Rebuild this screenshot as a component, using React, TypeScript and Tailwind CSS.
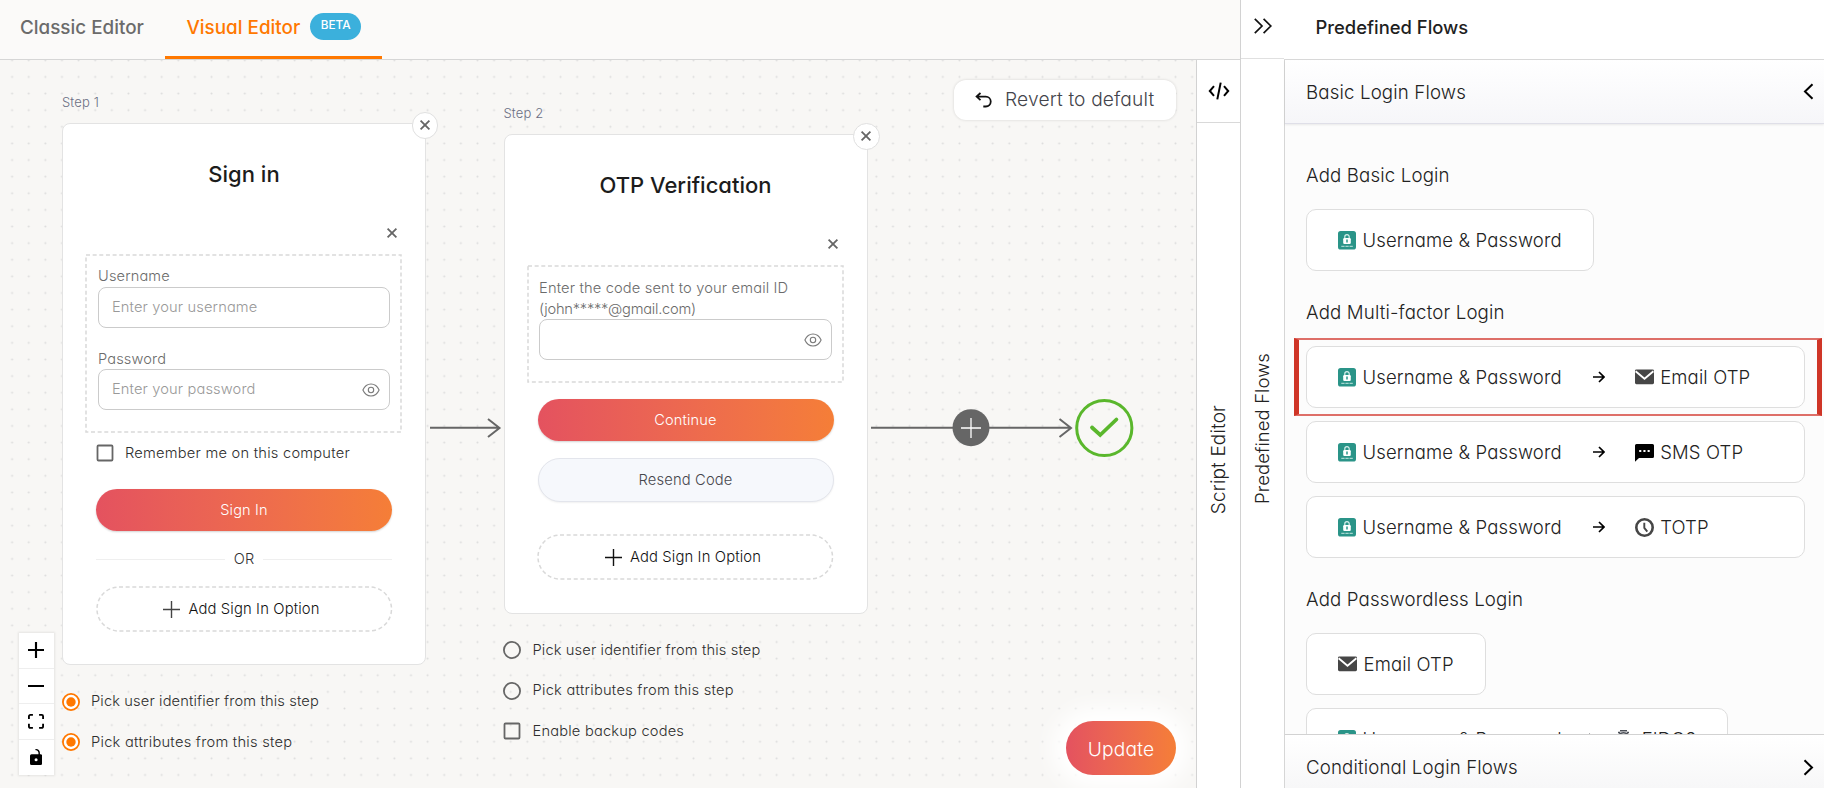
import type { ReactNode } from "react";

/* ---------- icons ---------- */

function CrossIcon() {
  return (
    <svg className="size-3" viewBox="0 0 12 12" fill="none" stroke="#666" strokeWidth="1.800">
      <path d="M1.600 1.600l8.800 8.800M10.400 1.600l-8.800 8.800" />
    </svg>
  );
}

function EyeIcon() {
  return (
    <svg className="h-[14px] w-[18px]" viewBox="0 0 18 14" fill="none" stroke="#7a7a7a" strokeWidth="1.100">
      <path d="M.9 7C2.600 3.200 5.500 1 9 1s6.400 2.200 8.100 6c-1.700 3.800-4.600 6-8.100 6S2.600 10.800.9 7z" />
      <circle cx="9" cy="7" r="2.700" />
    </svg>
  );
}

function ThinPlus({ color }: { color: string }) {
  return (
    <svg className="size-[17px]" viewBox="0 0 17 17" fill="none" stroke={color} strokeWidth="1.400">
      <path d="M8.500 0v17M0 8.500h17" />
    </svg>
  );
}

function LockBadge() {
  return (
    <svg className="h-[19px] w-[18px] shrink-0" viewBox="0 0 18 19">
      <rect width="18" height="18.500" rx="2.600" fill="#2a9488" />
      <path d="M6.800 8V5.800a2.200 2.200 0 0 1 4.400 0V8" fill="none" stroke="#d7efec" strokeWidth="1.200" />
      <rect x="5.200" y="7" width="7.600" height="6" rx="1.200" fill="#fff" />
      <path d="M9 8.600v2.800" stroke="#2a9488" strokeWidth="1.500" />
      <path d="M3.300 15.300h11.600" stroke="#c4e6e2" strokeWidth="1" strokeDasharray="3.300 .8" />
    </svg>
  );
}

function MailIcon() {
  return (
    <svg className="h-[16px] w-[19px] shrink-0" viewBox="0 0 19 16">
      <rect y=".5" width="19" height="14.700" rx="1.400" fill="#464646" />
      <path d="M.6 2.300l8.900 7.500 8.900-7.500" fill="none" stroke="#fff" strokeWidth="1.900" />
    </svg>
  );
}

function SmsIcon() {
  return (
    <svg className="h-[19px] w-[19px] shrink-0" viewBox="0 0 19 19">
      <path d="M1.500 1h16A1.500 1.500 0 0 1 19 2.500v11a1.500 1.500 0 0 1-1.500 1.500H4l-4 3.800V2.500A1.500 1.500 0 0 1 1.500 1z" fill="#000" />
      <path d="M4.200 8h2.100M8.400 8h2.100M12.600 8h2.100" stroke="#fff" strokeWidth="2.100" />
    </svg>
  );
}

function ClockIcon() {
  return (
    <svg className="h-[19px] w-[19px] shrink-0" viewBox="0 0 19 19" fill="none" stroke="#464646">
      <circle cx="9.500" cy="9.500" r="8.200" strokeWidth="2.600" />
      <path d="M9.300 4.800v5l3 3.800" strokeWidth="1.900" />
    </svg>
  );
}

function FidoIcon() {
  return (
    <svg className="h-[19px] w-[17px] shrink-0" viewBox="0 0 17 19" fill="none" stroke="#4b4f57" strokeWidth="1.500">
      <path d="M3 6.500C4 3.500 6 2.800 8.500 2.800s4.500.7 5.500 3.700M2 12c0-4 2-7 6.500-7s6.500 3 6.500 7M5 16c-.5-5 .5-8 3.500-8s4 3 3.500 8M5 .7h7M3 2.600h2M12 2.600h2" />
    </svg>
  );
}

function ArrowIcon() {
  return (
    <svg className="h-[12px] w-[12px] shrink-0" viewBox="0 0 12 12" fill="none" stroke="#000" strokeWidth="1.700">
      <path d="M0 6h10.800M6 1l5 5-5 5" />
    </svg>
  );
}

/* ---------- shared pieces ---------- */

function DashedOutline({ radius }: { radius: number }) {
  return (
    <svg className="pointer-events-none absolute inset-0 size-full overflow-visible">
      <rect
        className="h-full w-full"
        rx={radius}
        fill="none"
        stroke="#d9d9d9"
        strokeWidth="1.500"
        strokeDasharray="4 2.650"
      />
    </svg>
  );
}

function Field({ placeholder, eye }: { placeholder?: string; eye?: boolean }) {
  return (
    <div className="flex h-[40.500px] items-center justify-between rounded-lg border border-[#cbcbcb] bg-white pr-[9px] pl-[13px]">
      <span className="pt-[1.500px] text-[14.650px] text-[#999]">{placeholder}</span>
      {eye && (
        <span className="pt-px">
          <EyeIcon />
        </span>
      )}
    </div>
  );
}

function AddOption({ color }: { color: string }) {
  return (
    <div className="px-[0.750px]">
      <button className="relative flex h-[44px] w-full items-center justify-center gap-2 pr-[5px] text-[14.800px] text-[#111]">
        <DashedOutline radius={22} />
        <ThinPlus color={color} />
        Add Sign In Option
      </button>
    </div>
  );
}

function PrimaryButton({ children }: { children: ReactNode }) {
  return (
    <button className="flex h-[42px] w-full items-center justify-center rounded-full bg-linear-to-r from-[#e4525f] to-[#f57e37] pt-[2px] text-[14.600px] text-white shadow-[0_1px_2px_rgba(0,0,0,0.18)]">
      {children}
    </button>
  );
}

function Choice({ label, kind, tracking }: { label: string; kind: "on" | "off" | "box"; tracking?: string }) {
  return (
    <div className="-ml-[0.500px] flex h-5 items-center gap-[11.500px]">
      <svg className="size-[18px]" viewBox="0 0 18 18" fill="none" strokeWidth="1.800">
        {kind === "on" && (
          <>
            <circle cx="9" cy="9" r="8.100" stroke="#ff7800" fill="#fff" />
            <circle cx="9" cy="9" r="4.700" fill="#ff7800" />
          </>
        )}
        {kind === "off" && <circle cx="9" cy="9" r="8.100" stroke="#666" />}
        {kind === "box" && <rect x="1.500" y="1.500" width="15" height="15" rx="1" stroke="#666" />}
      </svg>
      <span className={`pt-[1.500px] text-[14.650px] whitespace-nowrap text-[#2e2e2e] ${tracking ?? ""}`}>{label}</span>
    </div>
  );
}

function StepCard({ title, height, children }: { title: string; height: string; children: ReactNode }) {
  return (
    <div className={`relative w-[364px] rounded-lg border border-[#e3e3e3] bg-white ${height}`}>
      <button className="absolute -top-[12px] -right-[13px] flex size-[26.500px] items-center justify-center rounded-full border border-[#e0e0e0] bg-white">
        <CrossIcon />
      </button>
      <h2 className="mt-[35px] text-center text-[22px] leading-[30px] font-[470] tracking-normal text-[#1c1c1c]">
        {title}
      </h2>
      <div className="mt-[38px] flex justify-end pr-[27.500px]">
        <CrossIcon />
      </div>
      {children}
    </div>
  );
}

/* ---------- canvas ---------- */

function FlowCanvas() {
  return (
    <div className="relative flex-1 overflow-hidden bg-[#f8f7f5]">
      <svg className="absolute inset-0 size-full">
        <defs>
          <pattern id="dots" x="3.800" y="-8" width="16.620" height="16.620" patternUnits="userSpaceOnUse">
            <circle cx="8.310" cy="8.310" r="1.050" fill="#dcdcdc" />
          </pattern>
        </defs>
        <rect width="100%" height="100%" fill="url(#dots)" />
        <g fill="none" stroke="#666" strokeWidth="2">
          <path d="M430 367.700h69M488 359l11.500 9-11.500 9" />
          <path d="M871 367.700h199M1059.500 359l11.500 9-11.500 9" />
          <circle cx="971" cy="367.700" r="18.500" fill="#666" stroke="none" />
          <path d="M971 358v20M961 368h20" stroke="#fff" strokeWidth="1.300" />
        </g>
        <g fill="none" stroke="#5ab72c" strokeWidth="3">
          <circle cx="1104.300" cy="368" r="27.600" />
          <path d="M1092 367.500l8.200 7.500 16.200-15.500" strokeWidth="3.800" strokeLinecap="round" />
        </g>
      </svg>

      <div className="absolute top-[34px] left-[62px]">
        <div className="h-[29px] text-[13px] leading-[17px] text-[#6b6f84]">Step 1</div>
        <StepCard title="Sign in" height="h-[542px]">
          <div className="relative mr-[24px] ml-[23px] mt-[16px] h-[177px] pt-[11px] pr-[11px] pl-3">
            <DashedOutline radius={0} />
            <div className="text-[14.600px] leading-5 text-[#6b6b6b]">Username</div>
            <div className="mt-px">
              <Field placeholder="Enter your username" />
            </div>
            <div className="mt-[21.500px] text-[14.600px] leading-5 text-[#6b6b6b]">Password</div>
            <Field placeholder="Enter your password" eye />
          </div>
          <div className="mx-[33px]">
            <div className="mt-[11px]">
              <Choice kind="box" label="Remember me on this computer" tracking="tracking-[0.240px]" />
            </div>
            <div className="mt-[26px]">
              <PrimaryButton>Sign In</PrimaryButton>
            </div>
            <div className="mt-[18.500px] flex h-5 items-center gap-[9px] text-[14.600px] text-[#333]">
              <span className="h-[1.500px] flex-1 bg-[#efefef]" />
              OR
              <span className="h-[1.500px] flex-1 bg-[#efefef]" />
            </div>
            <div className="mt-[17.500px]">
              <AddOption color="#444" />
            </div>
          </div>
        </StepCard>
        <div className="mt-[26.500px] flex flex-col gap-[20.500px]">
          <Choice kind="on" label="Pick user identifier from this step" />
          <Choice kind="on" label="Pick attributes from this step" tracking="tracking-[0.270px]" />
        </div>
      </div>

      <div className="absolute top-[45px] left-[503.500px]">
        <div className="h-[29px] text-[13px] leading-[17px] text-[#6b6f84]">Step 2</div>
        <StepCard title="OTP Verification" height="h-[480px]">
          <div className="relative mr-[24px] ml-[23px] mt-[16px] h-[116px] pt-[12px] pr-[11px] pl-[11.500px]">
            <DashedOutline radius={0} />
            <div className="text-[14.700px] leading-[20.500px] text-[#6b6b6b]">
              Enter the code sent to your email ID
              <br />
              <span className="tracking-[-0.250px]">(john*****@gmail.com)</span>
            </div>
            <Field eye />
          </div>
          <div className="mx-[33px]">
            <div className="mt-[17px]">
              <PrimaryButton>Continue</PrimaryButton>
            </div>
            <button className="mt-[17px] flex h-[43.500px] w-full items-center justify-center rounded-full border border-[#e3e5ec] bg-[#f6f8fc] text-[14.750px] text-[#46464c] shadow-[0_1px_2px_rgba(0,0,0,0.06)]">
              Resend Code
            </button>
            <div className="mt-[33.500px]">
              <AddOption color="#111" />
            </div>
          </div>
        </StepCard>
        <div className="mt-[26px] flex flex-col gap-[20.500px]">
          <Choice kind="off" label="Pick user identifier from this step" />
          <Choice kind="off" label="Pick attributes from this step" tracking="tracking-[0.270px]" />
          <Choice kind="box" label="Enable backup codes" tracking="tracking-[0.200px]" />
        </div>
      </div>

      <button className="absolute top-[19.500px] left-[953.500px] flex h-[40.500px] w-[222.500px] items-center rounded-xl bg-white pl-[21px] text-[19.200px] whitespace-nowrap text-[#44444b] shadow-[0_0_3px_rgba(0,0,0,0.15)]">
        <svg className="mr-[13.500px] h-4 w-[17px] shrink-0" viewBox="0 0 17 16" fill="none" stroke="#111" strokeWidth="1.800">
          <path d="M5.500 1L1.600 4.600l3.900 3.600M1.600 4.600h9.200a4.900 4.900 0 0 1 0 9.900H8.300" />
        </svg>
        Revert to default
      </button>

      <div className="absolute top-[573px] left-[18.500px] flex w-[35px] flex-col divide-y divide-[#eee] bg-white shadow-[0_0_2px_1px_rgba(0,0,0,0.08)]">
        <button className="flex h-[35.500px] items-center justify-center">
          <svg className="size-4" viewBox="0 0 32 32">
            <path d="M32 18.133H18.133V32h-4.266V18.133H0v-4.266h13.867V0h4.266v13.867H32z" />
          </svg>
        </button>
        <button className="flex h-[35.500px] items-center justify-center">
          <svg className="w-4" viewBox="0 0 32 5">
            <path d="M0 0h32v4.200H0z" />
          </svg>
        </button>
        <button className="flex h-[35.500px] items-center justify-center">
          <svg className="w-4" viewBox="0 0 32 30">
            <path d="M3.692 4.630c0-.53.4-.938.939-.938h5.215V0H4.708C2.130 0 0 2.054 0 4.630v5.216h3.692V4.631zM27.354 0h-5.200v3.692h5.170c.53 0 .984.4.984.939v5.215H32V4.631A4.624 4.624 0 0027.354 0zm.954 24.830c0 .532-.4.940-.939.940h-5.215v3.768h5.215c2.577 0 4.631-2.130 4.631-4.707v-5.139h-3.692v5.139zm-23.677.940c-.531 0-.939-.4-.939-.940v-5.138H0v5.139c0 2.577 2.130 4.707 4.708 4.707h5.138V25.770H4.631z" />
          </svg>
        </button>
        <button className="flex h-[35px] items-center justify-center">
          <svg className="h-4" viewBox="0 0 25 32">
            <path d="M21.333 10.667H19.810V7.619C19.810 3.429 16.380 0 12.190 0c-4.114 1.828-1.370 2.133.305 2.438 1.676.305 4.420 2.590 4.420 5.181v3.048H3.047A3.056 3.056 0 000 13.714v15.238A3.056 3.056 0 003.048 32h18.285a3.056 3.056 0 003.048-3.048V13.714a3.056 3.056 0 00-3.048-3.047zM12.190 24.533a3.056 3.056 0 01-3.047-3.047 3.056 3.056 0 013.047-3.048 3.056 3.056 0 013.048 3.048 3.056 3.056 0 01-3.048 3.047z" />
          </svg>
        </button>
      </div>

      <button className="absolute top-[661px] left-[1066px] flex h-[54px] w-[110px] items-center justify-center rounded-full bg-linear-to-r from-[#e4525f] to-[#f57e37] pt-[2px] text-[19.200px] text-white shadow-[0_0_22px_14px_#fff]">
        Update
      </button>
    </div>
  );
}

/* ---------- predefined flows panel ---------- */

function FlowItem({ width, children }: { width?: string; children: ReactNode }) {
  return (
    <div
      className={`flex h-[62px] shrink-0 items-center self-start rounded-[10px] border border-[#dedede] bg-white px-[31px] text-[18.500px] whitespace-nowrap text-[#222] ${width ?? ""}`}
    >
      {children}
    </div>
  );
}

function UserPass() {
  return (
    <span className="flex items-center gap-[6.500px]">
      <LockBadge />
      Username &amp; Password
    </span>
  );
}

function SecondFactor({ icon, label }: { icon: ReactNode; label: string }) {
  return (
    <>
      <span className="mr-[30px] ml-[31px]">
        <ArrowIcon />
      </span>
      <span className="flex items-center gap-[6.500px]">
        {icon}
        {label}
      </span>
    </>
  );
}

function FlowPanel() {
  return (
    <aside className="flex w-[540px] flex-col bg-white">
      <div className="h-[60px] shrink-0 border-b border-[#d9d9d9] pl-[31.500px]">
        <h1 className="mt-[14px] text-[18.400px] leading-[26px] font-[490] tracking-normal text-[#1f1f1f]">
          Predefined Flows
        </h1>
      </div>
      <div className="flex min-h-0 flex-1 flex-col border-l border-[#d6d6d6] bg-[#fcfcfc] text-[18.700px] leading-[27px] text-[#222]">
        <div className="z-10 flex h-16 shrink-0 items-center justify-between border-b border-[#dfdfe8] bg-linear-to-b from-white to-[#f6f6f9] pr-[10px] pl-[21px] shadow-[0_1px_2px_rgba(0,0,0,0.08)]">
          <span className="pt-px">Basic Login Flows</span>
          <svg className="h-[17px] w-[11px]" viewBox="0 0 11 17" fill="none" stroke="#000" strokeWidth="2">
            <path d="M9.500 1.300L2 8.500l7.500 7.200" />
          </svg>
        </div>
        <div className="flex min-h-0 flex-1 flex-col overflow-hidden px-[21px] pt-[38px]">
          <h3 className="shrink-0">Add Basic Login</h3>
          <div className="mt-5 flex shrink-0 flex-col">
            <FlowItem>
              <UserPass />
            </FlowItem>
          </div>
          <h3 className="mt-7 shrink-0">Add Multi-factor Login</h3>
          <div className="relative mt-5 flex shrink-0 flex-col gap-[13px]">
            <div className="pointer-events-none absolute -top-[8px] -left-[12px] h-[78px] w-[528px] border-x-[5px] border-y-[2px] border-x-[#cf3527] border-y-[#de6f68]" />
            <FlowItem width="w-[499px]">
              <UserPass />
              <SecondFactor icon={<MailIcon />} label="Email OTP" />
            </FlowItem>
            <FlowItem width="w-[499px]">
              <UserPass />
              <SecondFactor icon={<SmsIcon />} label="SMS OTP" />
            </FlowItem>
            <FlowItem width="w-[499px]">
              <UserPass />
              <SecondFactor icon={<ClockIcon />} label="TOTP" />
            </FlowItem>
          </div>
          <h3 className="mt-7 shrink-0">Add Passwordless Login</h3>
          <div className="mt-5 flex shrink-0 flex-col gap-[13px]">
            <FlowItem>
              <span className="flex items-center gap-[6.500px]">
                <MailIcon />
                Email OTP
              </span>
            </FlowItem>
            <FlowItem width="w-[422px]">
              <UserPass />
              <span className="mr-5 ml-[21px]">
                <ArrowIcon />
              </span>
              <span className="flex items-center gap-[10px]">
                <FidoIcon />
                FIDO2
              </span>
            </FlowItem>
          </div>
        </div>
        <div className="z-10 flex h-[54px] shrink-0 items-start justify-between border-t border-[#d2d2d2] bg-linear-to-b from-white to-[#f7f7f8] pt-[19px] pr-[10px] pl-[21px]">
          Conditional Login Flows
          <svg className="mt-[5px] h-[17px] w-[11px]" viewBox="0 0 11 17" fill="none" stroke="#000" strokeWidth="2">
            <path d="M1.500 1.300L9 8.500l-7.500 7.200" />
          </svg>
        </div>
      </div>
    </aside>
  );
}

export default function App() {
  return (
    <div className="flex h-[788px] w-[1824px] overflow-hidden bg-white font-['Inter','Noto_Sans',sans-serif] font-[365] tracking-[0.140px] [font-feature-settings:'cv11']">
      <div className="flex w-[1240px] flex-col">
        <header className="flex h-[60px] shrink-0 border-b border-[#d6d6d6] bg-[#fbfaf9] text-[18.850px] leading-[26px] font-[450] tracking-normal">
          <button className="h-[59px] w-[165px] pb-[3px] pl-5 text-left text-[#6b6b6b]">Classic Editor</button>
          <button className="flex h-[59px] w-[217px] items-center border-b-[3px] border-[#ff7800] pl-[21.500px] text-[#ff7800]">
            Visual Editor
            <span className="mb-[3px] ml-[10px] flex h-[27px] w-[51px] items-start justify-center rounded-full bg-[#3bb0dc] pt-[3px] text-[11.800px] leading-[18px] text-white">
              BETA
            </span>
          </button>
        </header>
        <div className="flex min-h-0 flex-1">
          <FlowCanvas />
          <div className="flex w-11 flex-col border-l border-[#d2d2d2] bg-white">
            <button className="flex h-[63px] shrink-0 items-center justify-center border-b border-[#d9d9d9]">
              <svg className="h-[18px] w-[22px]" viewBox="0 0 22 18" fill="none" stroke="#000" strokeWidth="2">
                <path d="M6 4.200L1.800 9 6 13.800M16 4.200L20.200 9 16 13.800M12.700.6L9.300 17.400" />
              </svg>
            </button>
            <div className="flex flex-1 items-center justify-center pt-2 pl-px">
              <span className="rotate-180 text-[19px] text-[#222] [writing-mode:vertical-rl]">Script Editor</span>
            </div>
          </div>
        </div>
      </div>
      <div className="flex w-11 flex-col border-l border-[#d2d2d2] bg-white">
        <button className="flex h-[59px] shrink-0 items-center justify-center border-b border-[#e0e0e0] pb-[7px]">
          <svg className="h-4 w-[18px]" viewBox="0 0 18 16" fill="none" stroke="#111" strokeWidth="1.700">
            <path d="M.8.800L8 8 .8 15.200M9.600.800L16.800 8l-7.200 7.200" />
          </svg>
        </button>
        <div className="flex flex-1 items-center justify-center pt-[9px]">
          <span className="rotate-180 text-[18.400px] text-[#222] [writing-mode:vertical-rl]">Predefined Flows</span>
        </div>
      </div>
      <FlowPanel />
    </div>
  );
}
